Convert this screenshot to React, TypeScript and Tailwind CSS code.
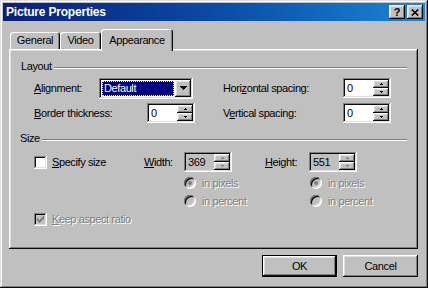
import React from "react";

// win9x bevels
const raised =
  "shadow-[inset_-1px_-1px_#0a0a0a,inset_1px_1px_#fff,inset_-2px_-2px_#808080,inset_2px_2px_#dfdfdf]";
const sunken =
  "shadow-[inset_-1px_-1px_#fff,inset_1px_1px_#808080,inset_-2px_-2px_#dfdfdf,inset_2px_2px_#0a0a0a]";
const frame =
  "shadow-[inset_-1px_-1px_#0a0a0a,inset_1px_1px_#dfdfdf,inset_-2px_-2px_#808080,inset_2px_2px_#fff]";
const panel =
  "shadow-[inset_-1px_-1px_#0a0a0a,inset_1px_1px_#fff,inset_-2px_-2px_#808080,inset_2px_2px_#dfdfdf]";
const dim = "text-[#808080] [text-shadow:1px_1px_0_#fff]";

function Arrow({ up, disabled }: { up?: boolean; disabled?: boolean }) {
  const fill = disabled ? "#808080" : "#000";
  return (
    <svg width="5" height="3" viewBox="0 0 5 3" shapeRendering="crispEdges">
      {up ? (
        <>
          <rect x="2" y="0" width="1" height="1" fill={fill} />
          <rect x="1" y="1" width="3" height="1" fill={fill} />
        </>
      ) : (
        <>
          <rect x="1" y="0" width="3" height="1" fill={fill} />
          <rect x="2" y="1" width="1" height="1" fill={fill} />
        </>
      )}
    </svg>
  );
}

function Spinner({ value, disabled }: { value: string; disabled?: boolean }) {
  return (
    <div
      className={`flex h-[20px] w-[48px] p-[2px] ${sunken} ${
        disabled ? "bg-[#c0c0c0]" : "bg-white"
      }`}
    >
      <div className="flex-1 pl-[2px] leading-[16px]">{value}</div>
      <div className="flex w-[16px] flex-col">
        <div className={`flex h-[8px] items-center justify-center bg-[#c0c0c0] ${raised}`}>
          <Arrow up disabled={disabled} />
        </div>
        <div className={`flex h-[8px] items-center justify-center bg-[#c0c0c0] ${raised}`}>
          <Arrow disabled={disabled} />
        </div>
      </div>
    </div>
  );
}

function Radio({ checked, label }: { checked?: boolean; label: string }) {
  return (
    <div className="flex items-center">
      <div
        className={`flex h-[12px] w-[12px] items-center justify-center rounded-full bg-[#c0c0c0] ${sunken}`}
      >
        {checked && <div className="h-[4px] w-[4px] rounded-full bg-[#808080]" />}
      </div>
      <span className={`ml-[6px] ${dim}`}>{label}</span>
    </div>
  );
}

function GroupTitle({ title, indent }: { title: string; indent: string }) {
  return (
    <div className={`flex h-[13px] items-center mr-[11px] ${indent}`}>
      <span className="leading-[13px]">{title}</span>
      <div className="ml-[2px] mt-[2px] h-[2px] flex-1 border-t border-b border-t-[#808080] border-b-white" />
    </div>
  );
}

export default function App() {
  return (
    <div
      className={`flex h-[288px] w-[428px] flex-col bg-[#c0c0c0] p-[3px] font-['Liberation_Sans',Arial,sans-serif] text-[11px] tracking-[-0.4px] text-black ${frame}`}
    >
      {/* title bar */}
      <div className="flex h-[18px] items-center bg-linear-to-r from-[#0a1f7a] via-[#0b4aa8] to-[#1a86d6] pl-[3px] pr-[2px]">
        <span className="flex-1 text-[12px] font-bold tracking-[-0.2px] text-white">
          Picture Properties
        </span>
        <div className="flex gap-[2px]">
          <div
            className={`flex h-[14px] w-[16px] items-center justify-center bg-[#c0c0c0] text-[11px] font-bold leading-none tracking-normal ${raised}`}
          >
            ?
          </div>
          <div className={`flex h-[14px] w-[16px] items-center justify-center bg-[#c0c0c0] ${raised}`}>
            <svg width="8" height="7" viewBox="0 0 8 7">
              <path d="M0.8 0.5L7.2 6.5M7.2 0.5L0.8 6.5" stroke="#000" strokeWidth="1.6" />
            </svg>
          </div>
        </div>
      </div>

      {/* tabs */}
      <div className="mt-[8px] flex items-end pl-[7px]">
        <div
          className={`flex h-[17px] w-[50px] items-center justify-center rounded-t-[3px] shadow-[inset_1px_1px_#fff,inset_-1px_0_#0a0a0a,inset_-2px_0_#808080]`}
        >
          General
        </div>
        <div
          className={`flex h-[17px] w-[41px] items-center justify-center rounded-t-[3px] shadow-[inset_1px_1px_#fff,inset_-1px_0_#0a0a0a,inset_-2px_0_#808080]`}
        >
          Video
        </div>
        <div className="relative z-10 -mb-[2px] flex h-[22px] w-[72px] items-start justify-center rounded-t-[3px] bg-[#c0c0c0] pt-[3px] shadow-[inset_1px_1px_#fff,inset_-1px_0_#0a0a0a,inset_-2px_0_#808080]">
          Appearance
        </div>
      </div>

      {/* panel */}
      <div className={`ml-[6px] flex h-[200px] w-[409px] flex-col pt-[11px] ${panel}`}>
        <GroupTitle title="Layout" indent="ml-[12px]" />

        <div className="mt-[5px] flex h-[20px] items-center pl-[25px]">
          <span className="w-[65px]">
            <u>A</u>lignment:
          </span>
          <div className={`flex h-[21px] w-[94px] bg-white p-[2px] ${sunken}`}>
            <div className="flex flex-1 p-[1px]">
              <div className="flex flex-1 items-center border border-dotted border-[#ffff90] bg-[#000080] pl-[1px] text-white">
                Default
              </div>
            </div>
            <div className={`flex w-[16px] items-center justify-center bg-[#c0c0c0] ${raised}`}>
              <svg width="7" height="4" viewBox="0 0 7 4" shapeRendering="crispEdges">
                <path d="M0 0h7v1h-1v1h-1v1h-1v1h-1v-1h-1v-1h-1v-1h-1z" fill="#000" />
              </svg>
            </div>
          </div>
          <span className="ml-[30px] w-[120px]">
            Hori<u>z</u>ontal spacing:
          </span>
          <Spinner value="0" />
        </div>

        <div className="mt-[5px] flex h-[20px] items-center pl-[25px]">
          <span className="w-[113px]">
            <u>B</u>order thickness:
          </span>
          <Spinner value="0" />
          <span className="ml-[28px] w-[120px]">
            V<u>e</u>rtical spacing:
          </span>
          <Spinner value="0" />
        </div>

        <div className="mt-[9px]">
          <GroupTitle title="Size" indent="ml-[11px]" />
        </div>

        <div className="mt-[7px] flex h-[20px] items-center pl-[25px]">
          <div className="flex w-[110px] items-center">
            <div className={`h-[13px] w-[13px] bg-white ${sunken}`} />
            <span className="ml-[5px]">
              <u>S</u>pecify size
            </span>
          </div>
          <span className="w-[40px]">
            <u>W</u>idth:
          </span>
          <Spinner value="369" disabled />
          <span className="ml-[33px] w-[44px]">
            <u>H</u>eight:
          </span>
          <Spinner value="551" disabled />
        </div>

        <div className="mt-[2px] flex h-[18px] items-center pl-[175px]">
          <div className="w-[126px]">
            <Radio checked label="in pixels" />
          </div>
          <Radio checked label="in pixels" />
        </div>
        <div className="flex h-[18px] items-center pl-[175px]">
          <div className="w-[126px]">
            <Radio label="in percent" />
          </div>
          <Radio label="in percent" />
        </div>

        <div className="flex h-[18px] items-center pl-[25px]">
          <div className={`flex h-[13px] w-[13px] items-center justify-center bg-[#c0c0c0] ${sunken}`}>
            <svg width="7" height="7" viewBox="0 0 7 7" shapeRendering="crispEdges">
              <path
                d="M6 0h1v3h-1v1h-1v1h-1v1h-1v1h-1v-1h-1v-1h-1v-3h1v1h1v1h1v-1h1v-1h1z"
                fill="#808080"
              />
            </svg>
          </div>
          <span className={`ml-[5px] ${dim}`}>
            <u>K</u>eep aspect ratio
          </span>
        </div>
      </div>

      {/* buttons */}
      <div className="mt-[6px] flex justify-end gap-[6px] pr-[7px]">
        <div className="h-[22px] w-[75px] border border-black">
          <div className={`flex h-full items-center justify-center ${raised}`}>OK</div>
        </div>
        <div className={`flex h-[22px] w-[75px] items-center justify-center ${raised}`}>
          Cancel
        </div>
      </div>
    </div>
  );
}
